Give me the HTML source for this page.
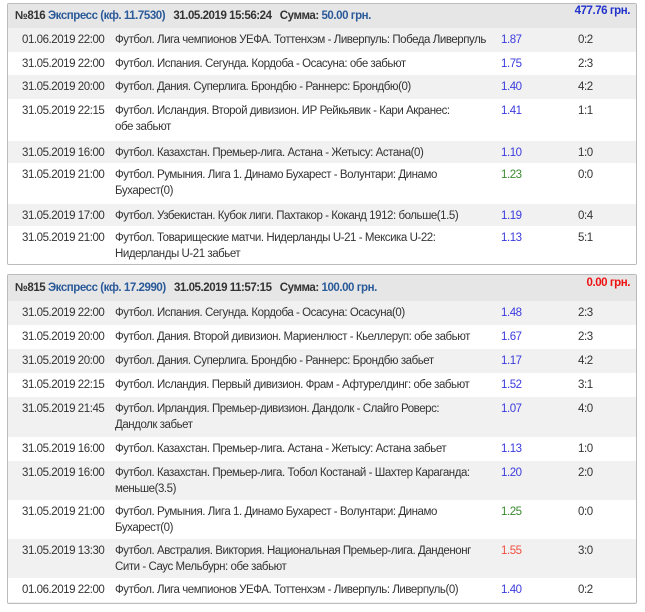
<!DOCTYPE html>
<html><head><meta charset="utf-8"><style>
body{margin:0;background:#fff;font-family:"Liberation Sans",sans-serif;font-size:11.5px;color:#333;letter-spacing:-0.45px}
.box{position:absolute;left:7px;width:628px;border:1px solid #bbb;border-radius:2px;background:#f1f1f1;overflow:hidden}
.hd{height:24px;background:#e6e6e6;font-weight:bold;line-height:24px;padding-left:7px;position:relative;color:#333}
.hd .b{color:#2a5a99}
.hd .r{position:absolute;right:6px;top:-5px}
.row{position:relative;line-height:16px}
.row:nth-child(even){background:#fff}
.row:nth-child(odd){background:#f1f1f1}
.d{position:absolute;left:14px;top:4px}
.e{position:absolute;left:107px;top:4px;white-space:nowrap}
.c{position:absolute;left:493px;top:4px;color:#3b3bdd}
.s{position:absolute;left:570px;top:4px}
.g{color:#3a8a30!important}.o{color:#f05040!important}
</style></head><body>
<div class="box" style="top:3px;height:260px">
<div class="hd">№816 <span class="b">Экспресс (кф. 11.7530)</span>&nbsp;&nbsp; 31.05.2019 15:56:24 &nbsp;&nbsp;Сумма: <span class="b">50.00 грн.</span><span class="r" style="color:#2233cc">477.76 грн.</span></div>
<div>
<div class="row" style="height:24px"><span class="d">01.06.2019 22:00</span><span class="e">Футбол. Лига чемпионов УЕФА. Тоттенхэм - Ливерпуль: Победа Ливерпуль</span><span class="c">1.87</span><span class="s">0:2</span></div>
<div class="row" style="height:23px"><span class="d">31.05.2019 22:00</span><span class="e">Футбол. Испания. Сегунда. Кордоба - Осасуна: обе забьют</span><span class="c">1.75</span><span class="s">2:3</span></div>
<div class="row" style="height:24px"><span class="d">31.05.2019 20:00</span><span class="e">Футбол. Дания. Суперлига. Брондбю - Раннерс: Брондбю(0)</span><span class="c">1.40</span><span class="s">4:2</span></div>
<div class="row" style="height:42px"><span class="d">31.05.2019 22:15</span><span class="e">Футбол. Исландия. Второй дивизион. ИР Рейкьявик - Кари Акранес:<br>обе забьют</span><span class="c">1.41</span><span class="s">1:1</span></div>
<div class="row" style="height:22px"><span class="d">31.05.2019 16:00</span><span class="e">Футбол. Казахстан. Премьер-лига. Астана - Жетысу: Астана(0)</span><span class="c">1.10</span><span class="s">1:0</span></div>
<div class="row" style="height:41px"><span class="d">31.05.2019 21:00</span><span class="e">Футбол. Румыния. Лига 1. Динамо Бухарест - Волунтари: Динамо<br>Бухарест(0)</span><span class="c g">1.23</span><span class="s">0:0</span></div>
<div class="row" style="height:22px"><span class="d">31.05.2019 17:00</span><span class="e">Футбол. Узбекистан. Кубок лиги. Пахтакор - Коканд 1912: больше(1.5)</span><span class="c">1.19</span><span class="s">0:4</span></div>
<div class="row" style="height:38px"><span class="d">31.05.2019 21:00</span><span class="e">Футбол. Товарищеские матчи. Нидерланды U-21 - Мексика U-22:<br>Нидерланды U-21 забьет</span><span class="c">1.13</span><span class="s">5:1</span></div>
</div></div>

<div class="box" style="top:274px;height:328px">
<div class="hd" style="height:26px;line-height:26px">№815 <span class="b">Экспресс (кф. 17.2990)</span>&nbsp;&nbsp; 31.05.2019 11:57:15 &nbsp;&nbsp;Сумма: <span class="b">100.00 грн.</span><span class="r" style="color:#ee1111">0.00 грн.</span></div>
<div>
<div class="row" style="height:24px"><span class="d">31.05.2019 22:00</span><span class="e">Футбол. Испания. Сегунда. Кордоба - Осасуна: Осасуна(0)</span><span class="c">1.48</span><span class="s">2:3</span></div>
<div class="row" style="height:24px"><span class="d">31.05.2019 20:00</span><span class="e">Футбол. Дания. Второй дивизион. Мариенлюст - Кьеллеруп: обе забьют</span><span class="c">1.67</span><span class="s">2:3</span></div>
<div class="row" style="height:24px"><span class="d">31.05.2019 20:00</span><span class="e">Футбол. Дания. Суперлига. Брондбю - Раннерс: Брондбю забьет</span><span class="c">1.17</span><span class="s">4:2</span></div>
<div class="row" style="height:24px"><span class="d">31.05.2019 22:15</span><span class="e">Футбол. Исландия. Первый дивизион. Фрам - Афтурелдинг: обе забьют</span><span class="c">1.52</span><span class="s">3:1</span></div>
<div class="row" style="height:40px"><span class="d">31.05.2019 21:45</span><span class="e">Футбол. Ирландия. Премьер-дивизион. Дандолк - Слайго Роверс:<br>Дандолк забьет</span><span class="c">1.07</span><span class="s">4:0</span></div>
<div class="row" style="height:24px"><span class="d">31.05.2019 16:00</span><span class="e">Футбол. Казахстан. Премьер-лига. Астана - Жетысу: Астана забьет</span><span class="c">1.13</span><span class="s">1:0</span></div>
<div class="row" style="height:39px"><span class="d">31.05.2019 16:00</span><span class="e">Футбол. Казахстан. Премьер-лига. Тобол Костанай - Шахтер Караганда:<br>меньше(3.5)</span><span class="c">1.20</span><span class="s">2:0</span></div>
<div class="row" style="height:39px"><span class="d">31.05.2019 21:00</span><span class="e">Футбол. Румыния. Лига 1. Динамо Бухарест - Волунтари: Динамо<br>Бухарест(0)</span><span class="c g">1.25</span><span class="s">0:0</span></div>
<div class="row" style="height:39px"><span class="d">31.05.2019 13:30</span><span class="e">Футбол. Австралия. Виктория. Национальная Премьер-лига. Данденонг<br>Сити - Саус Мельбурн: обе забьют</span><span class="c o">1.55</span><span class="s">3:0</span></div>
<div class="row" style="height:24px"><span class="d">01.06.2019 22:00</span><span class="e">Футбол. Лига чемпионов УЕФА. Тоттенхэм - Ливерпуль: Ливерпуль(0)</span><span class="c">1.40</span><span class="s">0:2</span></div>
</div></div>
</body></html>
